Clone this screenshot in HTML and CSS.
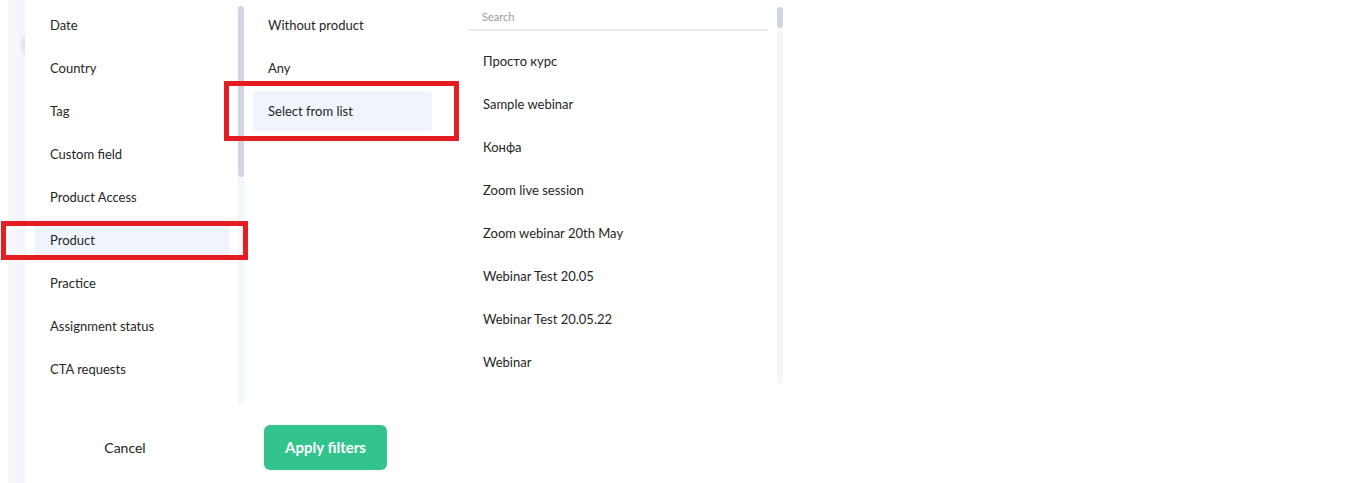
FILE: index.html
```html
<!DOCTYPE html>
<html lang="en">
<head>
<meta charset="utf-8">
<title>Filters</title>
<link rel="stylesheet" href="styles.css">
</head>
<body>
<div class="page">
  <div class="strip"></div>
  <div class="panel">
    <div class="columns">
      <ul class="col col-type">
        <li class="item">Date</li>
        <li class="item">Country</li>
        <li class="item">Tag</li>
        <li class="item">Custom field</li>
        <li class="item">Product Access</li>
        <li class="item active">Product</li>
        <li class="item">Practice</li>
        <li class="item">Assignment status</li>
        <li class="item">CTA requests</li>
      </ul>
      <div class="scroll scroll-1"><div class="thumb thumb-1"></div></div>
      <ul class="col col-mode">
        <li class="item">Without product</li>
        <li class="item">Any</li>
        <li class="item active">Select from list</li>
      </ul>
      <div class="col col-list">
        <div class="search">Search</div>
        <ul class="list">
          <li class="item">Просто курс</li>
          <li class="item">Sample webinar</li>
          <li class="item">Конфа</li>
          <li class="item">Zoom live session</li>
          <li class="item">Zoom webinar 20th May</li>
          <li class="item">Webinar Test 20.05</li>
          <li class="item">Webinar Test 20.05.22</li>
          <li class="item">Webinar</li>
        </ul>
      </div>
      <div class="scroll scroll-3"><div class="thumb thumb-3"></div></div>
    </div>
    <div class="footer">
      <button class="btn-cancel">Cancel</button>
      <button class="btn-apply">Apply filters</button>
    </div>
  </div>
  <div class="mark mark-product"></div>
  <div class="mark mark-select"></div>
</div>
</body>
</html>
```

FILE: styles.css
```css
* { box-sizing: border-box; }
html, body { margin: 0; padding: 0; background: #ffffff; }
body {
  font-family: Lato, "Noto Sans", sans-serif;
  font-size: 13px;
  color: #262626;
  width: 1350px;
  height: 483px;
  overflow: hidden;
}
.page {
  position: relative;
  display: flex;
  height: 483px;
  padding-left: 8px;
}
.strip {
  width: 17px;
  height: 100%;
  background:
    radial-gradient(ellipse 6px 12px at 17px 45px, rgba(200, 203, 214, 0.6), rgba(200, 203, 214, 0) 100%),
    linear-gradient(to right, #f9f9fd, #f4f4fb);
}
.panel {
  display: flex;
  flex-direction: column;
  width: 780px;
  background: #ffffff;
}
.columns {
  display: flex;
  height: 404px;
}
ul { list-style: none; margin: 0; padding: 0; }
.item {
  height: 40px;
  margin-bottom: 3px;
  padding-left: 15px;
  display: flex;
  align-items: center;
  border-radius: 4px;
  white-space: nowrap;
}
.item.active { background: #f0f5fd; }
.col-type {
  width: 213px;
  padding: 5px 9px 0 10px;
}
.scroll {
  width: 6px;
  border-radius: 3px;
  background: #f3f7fc;
}
.thumb {
  width: 6px;
  border-radius: 3px;
  background: #cfd6e0;
}
.scroll-1 { margin-top: 6px; height: 398px; }
.thumb-1 { height: 171px; }
.col-mode {
  width: 179px;
  margin-left: 9px;
  padding-top: 5px;
}
.col-list {
  width: 300px;
  margin-left: 36px;
}
.search {
  height: 31px;
  padding: 10px 0 0 14px;
  font-size: 11px;
  color: #9a9a9a;
  border-bottom: 2px solid #e8edf3;
}
.list { padding-top: 10px; }
.scroll-3 { margin-left: 9px; margin-top: 7px; height: 377px; }
.thumb-3 { height: 21px; }
.footer {
  display: flex;
  align-items: center;
  height: 79px;
  padding-top: 7px;
}
button {
  font-family: Lato, "Noto Sans", sans-serif;
  border: none;
  cursor: pointer;
}
.btn-cancel {
  width: 200px;
  background: transparent;
  font-size: 14px;
  color: #222222;
  padding: 0;
}
.btn-apply {
  margin-left: 39px;
  width: 123px;
  height: 45px;
  border-radius: 6px;
  background: #33c48d;
  color: #ffffff;
  font-size: 15px;
  font-weight: 700;
  padding: 0;
}
.mark {
  position: absolute;
  border: 5px solid #e41d22;
  pointer-events: none;
}
.mark-product { left: 1px; top: 221px; width: 247px; height: 39px; }
.mark-select { left: 224px; top: 81px; width: 235px; height: 60px; }
```
